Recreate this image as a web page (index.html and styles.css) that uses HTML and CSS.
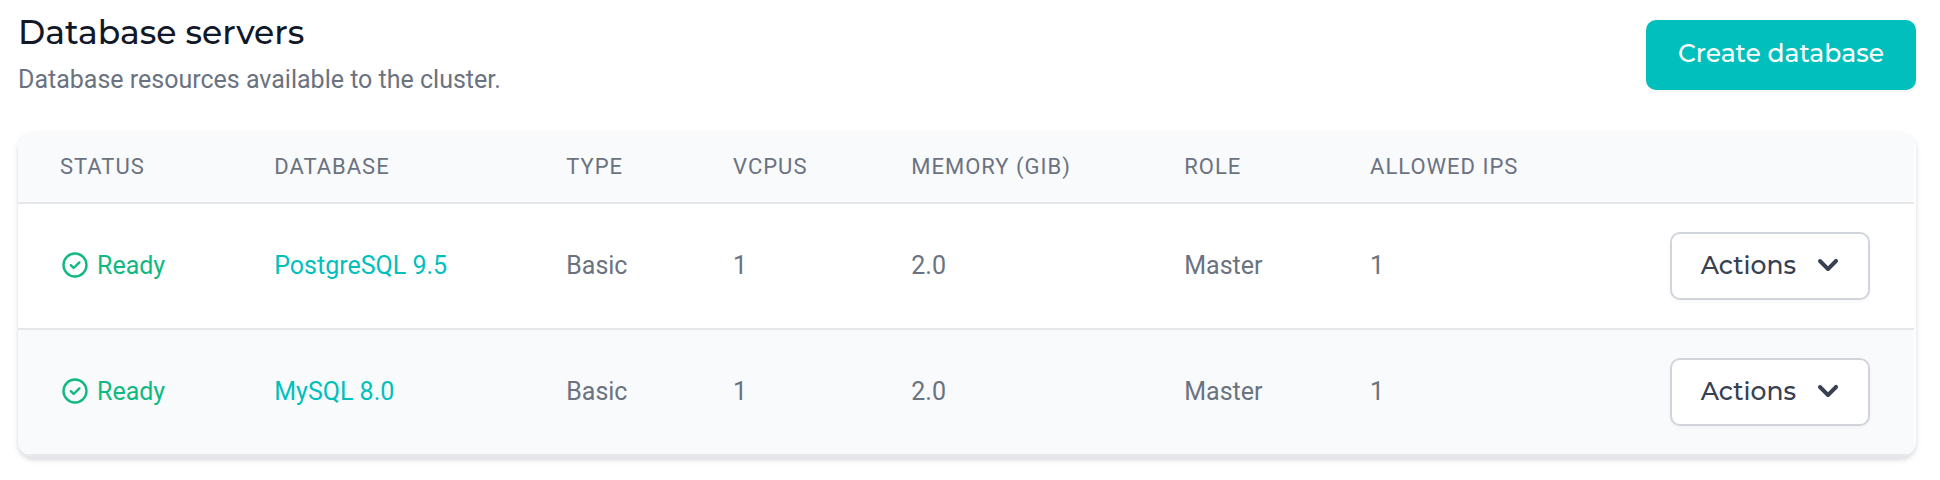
FILE: index.html
```html
<!DOCTYPE html>
<html lang="en">
<head>
  <meta charset="UTF-8">
  <meta name="viewport" content="width=device-width, initial-scale=1.0">
  <title>Database servers</title>
  <link rel="stylesheet" href="styles.css">
</head>
<body>
  <header class="page-header">
    <div>
      <h1 class="title">Database servers</h1>
      <p class="subtitle">Database resources available to the cluster.</p>
    </div>
    <button type="button" class="btn btn-primary">Create database</button>
  </header>

  <div class="card">
    <table class="servers">
      <colgroup>
        <col class="col-status">
        <col class="col-database">
        <col class="col-type">
        <col class="col-vcpus">
        <col class="col-memory">
        <col class="col-role">
        <col>
        <col class="col-actions">
      </colgroup>
      <thead>
        <tr>
          <th scope="col">Status</th>
          <th scope="col">Database</th>
          <th scope="col">Type</th>
          <th scope="col">vCPUs</th>
          <th scope="col">Memory (GiB)</th>
          <th scope="col">Role</th>
          <th scope="col">Allowed IPs</th>
          <td></td>
        </tr>
      </thead>
      <tbody>
        <tr>
          <td>
            <span class="status">
              <svg class="status-icon" viewBox="0 0 30 30" aria-hidden="true">
                <circle cx="15" cy="15" r="11.5"/>
                <path d="M10.8 15.2l2.8 2.8 5.8-5.6"/>
              </svg>
              Ready
            </span>
          </td>
          <td><a href="#postgresql">PostgreSQL 9.5</a></td>
          <td>Basic</td>
          <td>1</td>
          <td>2.0</td>
          <td>Master</td>
          <td>1</td>
          <td class="actions">
            <button type="button" class="btn btn-default" aria-haspopup="true">
              Actions
              <svg class="chevron" viewBox="0 0 20 20" aria-hidden="true">
                <path fill-rule="evenodd" d="M5.293 7.293a1 1 0 011.414 0L10 10.586l3.293-3.293a1 1 0 111.414 1.414l-4 4a1 1 0 01-1.414 0l-4-4a1 1 0 010-1.414z" clip-rule="evenodd"/>
              </svg>
            </button>
          </td>
        </tr>
        <tr>
          <td>
            <span class="status">
              <svg class="status-icon" viewBox="0 0 30 30" aria-hidden="true">
                <circle cx="15" cy="15" r="11.5"/>
                <path d="M10.8 15.2l2.8 2.8 5.8-5.6"/>
              </svg>
              Ready
            </span>
          </td>
          <td><a href="#mysql">MySQL 8.0</a></td>
          <td>Basic</td>
          <td>1</td>
          <td>2.0</td>
          <td>Master</td>
          <td>1</td>
          <td class="actions">
            <button type="button" class="btn btn-default" aria-haspopup="true">
              Actions
              <svg class="chevron" viewBox="0 0 20 20" aria-hidden="true">
                <path fill-rule="evenodd" d="M5.293 7.293a1 1 0 011.414 0L10 10.586l3.293-3.293a1 1 0 111.414 1.414l-4 4a1 1 0 01-1.414 0l-4-4a1 1 0 010-1.414z" clip-rule="evenodd"/>
              </svg>
            </button>
          </td>
        </tr>
      </tbody>
    </table>
  </div>
</body>
</html>
```
FILE: styles.css
```css
:root {
  --teal: #00bfbc;
  --green: #10b981;
  --gray-50: #f9fafc;
  --gray-200: #e5e7eb;
  --gray-300: #d1d5db;
  --gray-500: #6b7280;
  --gray-700: #374151;
  --gray-900: #111827;
  --heading-font: Montserrat, Inter, sans-serif;
}

* {
  box-sizing: border-box;
}

body {
  margin: 0;
  padding: 12px 24px 20px 18px;
  background: #fff;
  color: var(--gray-500);
  font-family: Roboto, sans-serif;
  font-size: 25px;
  line-height: 36px;
}

.page-header {
  display: flex;
  justify-content: space-between;
  align-items: flex-start;
  margin-bottom: 35px;
}

.title {
  margin: 0 0 10px;
  color: var(--gray-900);
  font-family: var(--heading-font);
  font-size: 33px;
  font-weight: 500;
  line-height: 40px;
}

.subtitle {
  margin: 0;
}

.btn {
  display: inline-flex;
  align-items: center;
  border-radius: 10px;
  font-family: var(--heading-font);
  font-size: 25px;
  font-weight: 500;
  line-height: 36px;
  cursor: pointer;
}

.btn-primary {
  margin-top: 8px;
  padding: 15px 32px 19px;
  border: 0;
  background: var(--teal);
  color: #fff;
  box-shadow: 0 2px 4px rgba(0, 0, 0, 0.05);
}

.btn-default {
  padding: 11px 20px 13px 29px;
  border: 2px solid var(--gray-300);
  background: #fff;
  color: var(--gray-700);
  box-shadow: 0 2px 4px rgba(0, 0, 0, 0.03);
}

.chevron {
  width: 40px;
  height: 40px;
  margin-left: 12px;
  fill: currentColor;
}

.card {
  overflow: hidden;
  padding-right: 2px;
  border-bottom: 2px solid var(--gray-200);
  border-radius: 16px;
  background: #fff;
  box-shadow: 0 2px 6px rgba(0, 0, 0, 0.1), 0 2px 4px rgba(0, 0, 0, 0.06);
}

.servers {
  width: 100%;
  border-collapse: separate;
  border-spacing: 0;
  table-layout: fixed;
}

.servers th,
.servers td {
  padding: 28px 44px 28px 42px;
  border-bottom: 2px solid var(--gray-200);
  text-align: left;
  vertical-align: middle;
}

.servers thead th,
.servers thead td {
  padding-top: 18px;
  padding-bottom: 19px;
  background: var(--gray-50);
  font-size: 22px;
  font-weight: 400;
  line-height: 32px;
  letter-spacing: 1px;
  text-transform: uppercase;
  white-space: nowrap;
}

.servers tbody tr:nth-child(even) {
  background: var(--gray-50);
}

.servers a {
  color: var(--teal);
  text-decoration: none;
}

.servers .actions {
  text-align: right;
}

.actions .btn {
  vertical-align: top;
}

.col-status { width: 11.3%; }
.col-database { width: 15.4%; }
.col-type { width: 8.8%; }
.col-vcpus { width: 9.4%; }
.col-memory { width: 14.4%; }
.col-role { width: 9.8%; }
.col-actions { width: 16%; }

.status {
  display: flex;
  align-items: center;
  gap: 7px;
  color: var(--green);
}

.status-icon {
  width: 30px;
  height: 30px;
  margin-bottom: 2px;
  fill: none;
  stroke: currentColor;
  stroke-width: 2.4;
  stroke-linecap: round;
  stroke-linejoin: round;
}
```
